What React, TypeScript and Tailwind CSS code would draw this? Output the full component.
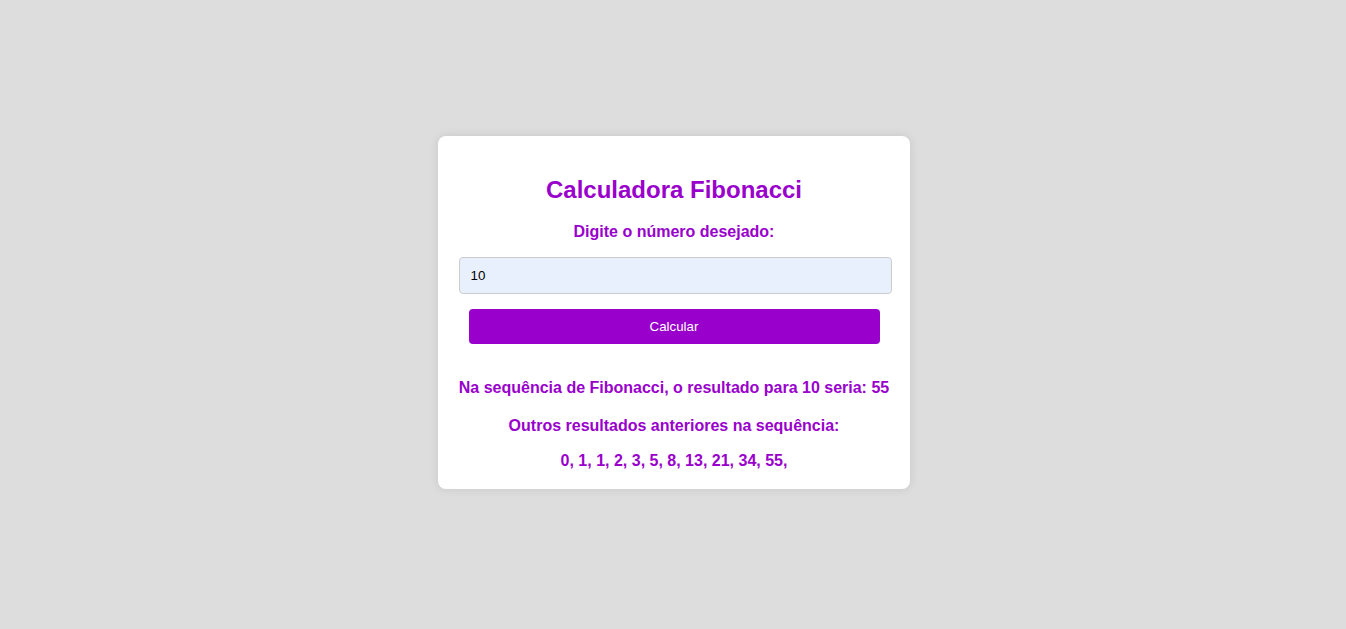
import React from "react";

export default function App() {
  const seq = [0, 1, 1, 2, 3, 5, 8, 13, 21, 34, 55];
  return (
    <div
      className="flex min-h-[629px] w-full items-center justify-center bg-[#dddddd] pb-[4px] pl-[2px]"
      style={{ fontFamily: '"Liberation Sans", Arial, sans-serif' }}
    >
      <div className="flex w-[472px] flex-col items-center rounded-lg bg-white px-[20px] pb-[19px] pt-[40px] shadow-[0_0_10px_rgba(0,0,0,0.1)]">
        <h1 className="text-[24px] font-bold leading-[28px] text-[#9900cc]">
          Calculadora Fibonacci
        </h1>
        <label className="mt-[19px] text-[16px] font-bold leading-[18px] text-[#9900cc]">
          Digite o número desejado:
        </label>
        <input
          type="number"
          defaultValue="10"
          className="mt-[16px] h-[37px] w-[433px] translate-x-[1px] rounded border border-[#cccccc] bg-[#e8f0fe] px-[11px] text-[13.33px] text-black outline-none"
        />
        <button className="mt-[15px] h-[35px] w-[411px] rounded bg-[#9900cc] text-[13.33px] text-white">
          Calcular
        </button>
        <p className="mt-[35px] text-[16px] font-bold leading-[18px] text-[#9900cc]">
          Na sequência de Fibonacci, o resultado para 10 seria: 55
        </p>
        <p className="mt-[20px] text-[16px] font-bold leading-[18px] text-[#9900cc]">
          Outros resultados anteriores na sequência:
        </p>
        <p className="mt-[17px] text-[16px] font-bold leading-[18px] text-[#9900cc]">
          {seq.map((n) => `${n}, `).join("")}
        </p>
      </div>
    </div>
  );
}
